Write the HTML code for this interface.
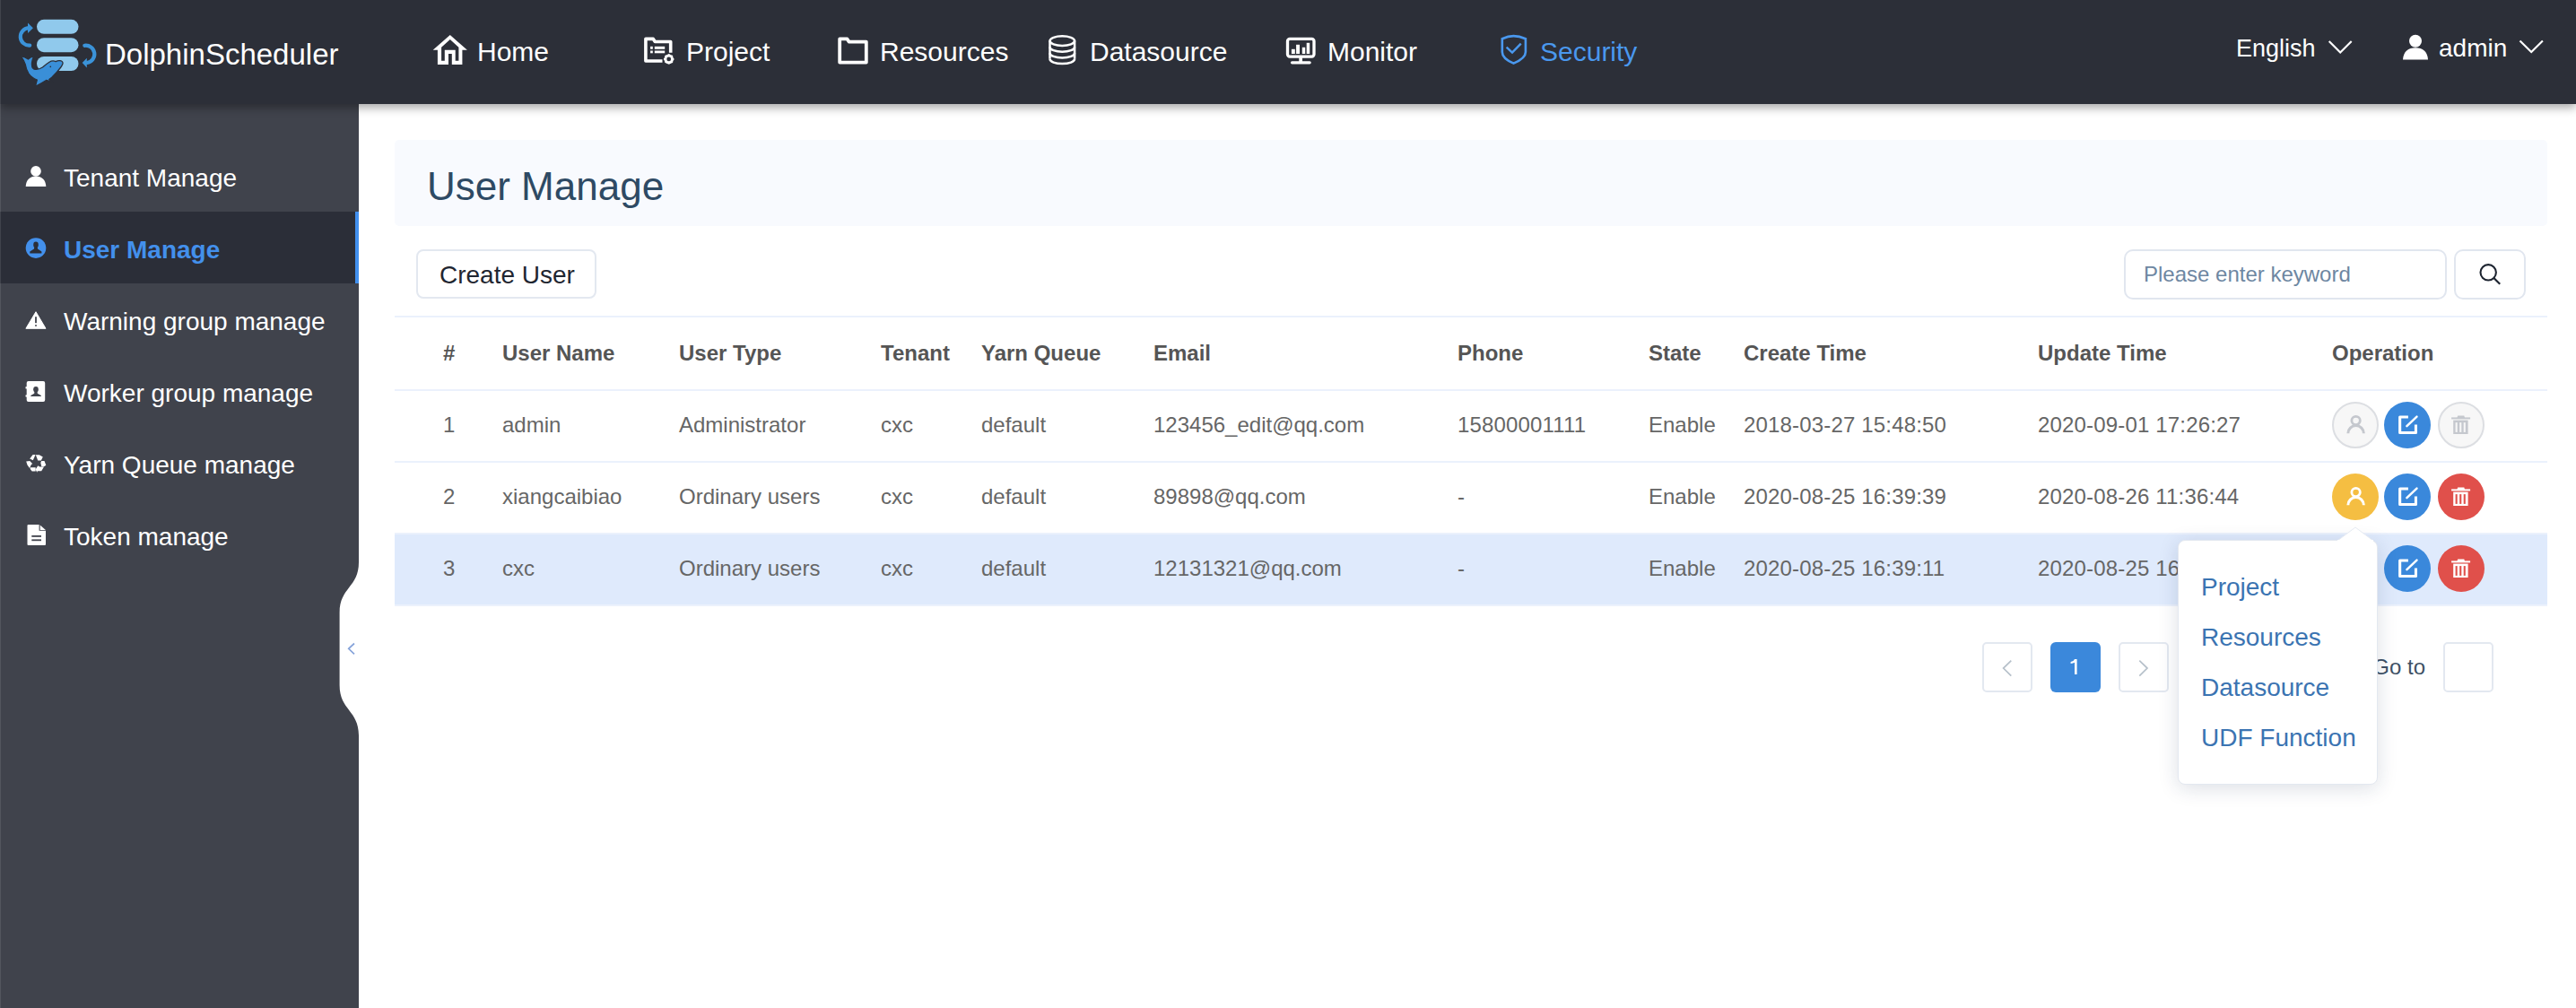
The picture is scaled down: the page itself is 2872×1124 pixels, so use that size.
<!DOCTYPE html>
<html><head><meta charset="utf-8">
<style>
*{box-sizing:border-box;margin:0;padding:0}
html,body{width:2872px;height:1124px;overflow:hidden;background:#fff;font-family:"Liberation Sans",sans-serif}
.a{position:absolute;white-space:pre}
#hdr{position:absolute;left:0;top:0;width:2872px;height:116px;background:#2c2f38;z-index:5;box-shadow:0 4px 10px rgba(0,0,0,.35)}
#side{position:absolute;left:0;top:116px;width:400px;height:1008px;background:#40434c}
.nav{font-size:30px;line-height:30px;color:#fff;top:43px;margin-left:-1px}
.si{font-size:28px;line-height:28px;color:#fff;left:71px;margin-top:1px}
.th{font-size:24px;line-height:24px;font-weight:bold;color:#555;top:382px}
.td{font-size:24px;line-height:24px;color:#666}
.dt{letter-spacing:.17px}
.pop{font-size:28px;line-height:28px;color:#3b74b2;left:2454px;margin-top:1px}
svg{position:absolute;overflow:visible}
</style></head><body>

<div id="hdr">
  <!-- logo -->
  <svg style="left:0;top:0" width="120" height="116" viewBox="0 0 120 116">
    <rect x="41" y="21.8" width="46.5" height="16" rx="8" fill="#90c9ec"/>
    <rect x="41" y="42.2" width="46.5" height="16" rx="8" fill="#90c9ec"/>
    <rect x="41" y="63" width="46.5" height="16" rx="8" fill="#90c9ec"/>
    <path d="M33.2,50.6 A9.7,9.7 0 1 1 31.8,31.2" fill="none" stroke="#3b93d9" stroke-width="4.2" stroke-linecap="round"/>
    <path d="M31,25.5 L36.9,31.2 L31,37.1 Z" fill="#3b93d9"/>
    <path d="M94.3,50.8 A9.6,9.6 0 1 1 97,70" fill="none" stroke="#3b93d9" stroke-width="4.2" stroke-linecap="round"/>
    <path d="M96.8,64.7 L91.7,70 L96.8,75.5 Z" fill="#3b93d9"/>
    <path d="M23.3,62.6 Q28,63.5 31.4,66 Q34,63.5 37.6,62.8 Q35.8,67 35.5,70 Q35,75 37.5,76.8 Q42,78.5 47.5,75 Q52,71 55,69.2 Q58.5,67 62.2,68.6 Q64.5,67.3 67,67.7 Q70.5,68.3 70,71 Q69,73.5 67.8,75 Q63,81.5 58,86 Q56,87.5 54.8,88.5 L58.8,91.5 L51.5,89.5 Q46,93 39.5,96.4 L41.3,89 Q35,86.5 32,82 Q29,77 28.3,72 Q27,67.5 23.3,62.6 Z" fill="#3a8fd8" stroke="#2c2f38" stroke-width="1.3" stroke-linejoin="round"/>
    <circle cx="56.3" cy="74.4" r="0.8" fill="#2c2f38"/>
  </svg>
  <div class="a" style="left:117px;top:44px;font-size:33px;line-height:33px;color:#fff">DolphinScheduler</div>

  <!-- home -->
  <svg style="left:475px;top:30px" width="60" height="50" viewBox="0 0 60 50">
    <path fill="#fff" fill-rule="evenodd" d="M26.8,8.9 L45.9,25.8 L40.4,25.8 L40.4,41.9 L28.8,41.9 L28.8,30 L25,30 L25,41.9 L12.9,41.9 L12.9,25.8 L7.7,25.8 Z M26.8,14.1 L36.4,22.8 L36.4,37.7 L32.7,37.7 L32.7,25.8 L20.8,25.8 L20.8,37.7 L17.1,37.7 L17.1,22.8 Z"/>
  </svg>
  <div class="a nav" style="left:533px">Home</div>
  <!-- project -->
  <svg style="left:710px;top:30px" width="60" height="50" viewBox="0 0 60 50">
    <path d="M28.5,38 H9.9 V13.4 H18.3 L20.3,16.5 H37.7 V28.8" fill="none" stroke="#fff" stroke-width="3.6" stroke-linejoin="round"/>
    <rect x="15.1" y="21.8" width="2.7" height="3" fill="#fff"/>
    <rect x="19.8" y="21.8" width="11.4" height="3" fill="#fff"/>
    <rect x="15.1" y="26.5" width="2.7" height="2.8" fill="#fff"/>
    <rect x="19.8" y="26.5" width="11.4" height="2.8" fill="#fff"/>
    <circle cx="35.7" cy="35.9" r="3.9" fill="none" stroke="#fff" stroke-width="2.8"/>
    <path d="M35.7,30.2 V41.6 M30,35.9 H41.4 M31.7,31.9 L39.7,39.9 M39.7,31.9 L31.7,39.9" stroke="#fff" stroke-width="2" />
    <circle cx="35.7" cy="35.9" r="2.4" fill="#2c2f38"/>
  </svg>
  <div class="a nav" style="left:766px">Project</div>
  <!-- resources -->
  <svg style="left:925px;top:30px" width="60" height="50" viewBox="0 0 60 50">
    <path d="M11.2,13.4 H19.5 L21.5,16.6 H40.8 V39.6 H11.2 Z" fill="none" stroke="#fff" stroke-width="3.8" stroke-linejoin="round"/>
  </svg>
  <div class="a nav" style="left:982px">Resources</div>
  <!-- datasource -->
  <svg style="left:1160px;top:30px" width="60" height="50" viewBox="0 0 60 50">
    <g fill="none" stroke="#fff" stroke-width="2.5">
      <ellipse cx="24.3" cy="15.6" rx="13.8" ry="5.3"/>
      <path d="M10.5,15.6 V35.8 M38.1,15.6 V35.8"/>
      <path d="M10.5,22.4 A13.8,5.3 0 0 0 38.1,22.4"/>
      <path d="M10.5,29.2 A13.8,5.3 0 0 0 38.1,29.2"/>
      <path d="M10.5,35.8 A13.8,5.3 0 0 0 38.1,35.8"/>
    </g>
  </svg>
  <div class="a nav" style="left:1216px">Datasource</div>
  <!-- monitor -->
  <svg style="left:1425px;top:30px" width="60" height="50" viewBox="0 0 60 50">
    <rect x="10.5" y="13.4" width="29.5" height="19.7" rx="2.5" fill="none" stroke="#fff" stroke-width="3.3"/>
    <rect x="23.3" y="34" width="3.7" height="5" fill="#fff"/>
    <path d="M15.5,39.8 H35.2" stroke="#fff" stroke-width="3.2" stroke-linecap="round"/>
    <rect x="14.9" y="24.8" width="3.9" height="5.2" fill="#fff"/>
    <rect x="20.1" y="19.8" width="3.9" height="10.2" fill="#fff"/>
    <rect x="26.8" y="22.8" width="3.4" height="7.2" fill="#fff"/>
    <rect x="31.7" y="17.8" width="3.5" height="12.2" fill="#fff"/>
  </svg>
  <div class="a nav" style="left:1481px">Monitor</div>
  <!-- security -->
  <svg style="left:1660px;top:30px" width="60" height="50" viewBox="0 0 60 50">
    <path d="M27.5,10.1 C32,10.1 37,11.5 40.9,13.2 V28 C40.9,33 35,37.5 27.5,40.6 C20,37.5 14.8,33 14.8,28 V13.2 C18.5,11.5 23,10.1 27.5,10.1 Z" fill="none" stroke="#4a98ee" stroke-width="2.6"/>
    <path d="M19.6,22.6 L26,28.6 L35.7,18.6" fill="none" stroke="#4a98ee" stroke-width="2.5"/>
  </svg>
  <div class="a nav" style="left:1718px;color:#4a98ee">Security</div>

  <div class="a" style="left:2493px;top:40px;font-size:27px;line-height:28px;color:#fff">English</div>
  <svg style="left:2590px;top:41px" width="40" height="30" viewBox="0 0 40 30">
    <path d="M6.7,5 L19.2,17.5 L31.7,5" fill="none" stroke="#fff" stroke-width="2.2"/>
  </svg>
  <svg style="left:2670px;top:30px" width="40" height="50" viewBox="0 0 40 50">
    <circle cx="23" cy="15.8" r="7" fill="#fff"/>
    <path d="M9,36.4 C9.5,27.5 15,23.2 23,23.2 C31,23.2 36.5,27.5 37,36.4 Z" fill="#fff"/>
  </svg>
  <div class="a" style="left:2719px;top:40px;font-size:28px;line-height:28px;color:#fff">admin</div>
  <svg style="left:2800px;top:40px" width="40" height="30" viewBox="0 0 40 30">
    <path d="M9.5,5.5 L22.2,18 L34.9,5.5" fill="none" stroke="#fff" stroke-width="2.2"/>
  </svg>
</div>

<div id="side">
  <div style="position:absolute;left:0;top:120px;width:400px;height:80px;background:#2b2e38"></div>
  <div style="position:absolute;left:396px;top:120px;width:4px;height:80px;background:#4290ee"></div>
</div>
<!-- sidebar icons and text (absolute to page) -->
<svg style="left:20px;top:175px" width="40" height="40" viewBox="0 0 40 40">
  <circle cx="20" cy="15.9" r="5.8" fill="#fff"/>
  <path d="M8.7,32.9 C9,25.5 13.5,21.4 20,21.4 C26.5,21.4 31,25.5 31.3,32.9 Z" fill="#fff"/>
</svg>
<div class="a si" style="top:184px">Tenant Manage</div>
<svg style="left:20px;top:255px" width="40" height="40" viewBox="0 0 40 40">
  <circle cx="20" cy="21.6" r="11.3" fill="#4390ec"/>
  <ellipse cx="20" cy="17.9" rx="2.8" ry="3.4" fill="#2b2e38"/>
  <path d="M18.2,20.5 H21.8 L22,22.6 L26.4,25.6 V27.4 H13.3 V25.6 L18,22.6 Z" fill="#2b2e38"/>
</svg>
<div class="a si" style="top:264px;font-weight:bold;color:#4390ec">User Manage</div>
<svg style="left:20px;top:335px" width="40" height="40" viewBox="0 0 40 40">
  <path d="M20,12.7 L31,31.3 H8.9 Z" fill="#fff" stroke="#fff" stroke-width="1" stroke-linejoin="round"/>
  <rect x="19.1" y="18.2" width="1.8" height="7" fill="#40434c"/>
  <rect x="19.1" y="27.2" width="1.8" height="1.6" fill="#40434c"/>
</svg>
<div class="a si" style="top:344px">Warning group manage</div>
<svg style="left:20px;top:415px" width="40" height="40" viewBox="0 0 40 40">
  <rect x="9.7" y="10.1" width="20.5" height="22.8" rx="2" fill="#fff"/>
  <rect x="8.5" y="16" width="1.5" height="2.6" rx=".7" fill="#fff"/>
  <rect x="8.5" y="25.2" width="1.5" height="2.6" rx=".7" fill="#fff"/>
  <ellipse cx="20" cy="19.3" rx="2.8" ry="3.2" fill="#40434c"/>
  <path d="M18.4,22 H21.6 L21.8,23.8 L25.8,26 V27 H14.3 V26 L18.2,23.8 Z" fill="#40434c"/>
</svg>
<div class="a si" style="top:424px">Worker group manage</div>
<svg style="left:20px;top:495px" width="40" height="40" viewBox="0 0 40 40">
  <g fill="#fff">
    <path d="M13.2,16.5 L16.6,11.9 H19.6 L16.8,18.3 Z"/>
    <path d="M19.8,12.2 H23.8 L27.8,14.5 L25.8,18.4 H22.2 L21.5,16.5 Z"/>
    <path d="M26.2,19 H29.5 L31.3,23.8 L29,25.3 H26.3 L25.3,21 Z"/>
    <path d="M24.3,25.6 H29 L26.2,30.2 H21.8 L21.3,31.7 L19.6,28.5 L22.3,24.3 Z"/>
    <path d="M13.7,26.2 H19.7 V30.6 H15.7 L13.7,28 Z"/>
    <path d="M9.2,19.5 L13.2,19 L16.3,22.3 L15,22.8 L13,27 L10.5,23.5 Z"/>
  </g>
</svg>
<div class="a si" style="top:504px">Yarn Queue manage</div>
<svg style="left:20px;top:575px" width="40" height="40" viewBox="0 0 40 40">
  <path d="M10.5,11 Q10.5,9.9 11.6,9.9 H23.6 V16.7 H31 V32 Q31,33.1 29.9,33.1 H11.6 Q10.5,33.1 10.5,32 Z" fill="#fff"/>
  <path d="M24.7,10.4 L30.9,16 H24.7 Z" fill="#fff"/>
  <rect x="15.3" y="22" width="10.7" height="1.8" fill="#40434c"/>
  <rect x="15.3" y="26.4" width="10.7" height="1.8" fill="#40434c"/>
</svg>
<div class="a si" style="top:584px">Token manage</div>

<!-- collapse notch -->
<svg style="left:370px;top:600px" width="40" height="240" viewBox="0 0 40 240">
  <path d="M30,0 V27 C30,55 8.6,55 8.6,83 V164 C8.6,192 30,192 30,220 V240 H40 V0 Z" fill="#fff"/>
  <path d="M25,117.5 L18.7,123.3 L25,129.3" fill="none" stroke="#86a3da" stroke-width="1.7"/>
</svg>

<!-- main content -->
<div style="position:absolute;left:440px;top:156px;width:2400px;height:96px;background:#f8fafe;border-radius:5px"></div>
<div class="a" style="left:476px;top:186px;font-size:44px;line-height:44px;color:#2e4a64">User Manage</div>

<div style="position:absolute;left:464px;top:278px;width:201px;height:55px;border:2px solid #e3e8f0;border-radius:8px;background:#fff"></div>
<div class="a" style="left:490px;top:293px;font-size:28px;line-height:28px;color:#1f2631">Create User</div>

<div style="position:absolute;left:2368px;top:278px;width:360px;height:56px;border:2px solid #e1e6ef;border-radius:10px;background:#fff"></div>
<div class="a" style="left:2390px;top:294px;font-size:24px;line-height:24px;color:#6e87a2">Please enter keyword</div>
<div style="position:absolute;left:2736px;top:278px;width:80px;height:56px;border:2px solid #e1e6ef;border-radius:10px;background:#fff"></div>
<svg style="left:2760px;top:290px" width="32" height="32" viewBox="0 0 32 32">
  <circle cx="14.2" cy="13.8" r="8.7" fill="none" stroke="#1d2430" stroke-width="2.1"/>
  <path d="M20.4,20 L27.2,26.8" stroke="#1d2430" stroke-width="2.2"/>
</svg>

<!-- table -->
<div style="position:absolute;left:440px;top:352px;width:2400px;height:2px;background:#ebf1fc"></div>
<div style="position:absolute;left:440px;top:434px;width:2400px;height:2px;background:#ebf1fc"></div>
<div style="position:absolute;left:440px;top:514px;width:2400px;height:2px;background:#ebf1fc"></div>
<div style="position:absolute;left:440px;top:594px;width:2400px;height:2px;background:#ebf1fc"></div>
<div style="position:absolute;left:440px;top:596px;width:2400px;height:78px;background:#dfeafc"></div>
<div style="position:absolute;left:440px;top:674px;width:2400px;height:2px;background:#ebf1fc"></div>

<div class="a th" style="left:494px">#</div>
<div class="a th" style="left:560px">User Name</div>
<div class="a th" style="left:757px">User Type</div>
<div class="a th" style="left:982px">Tenant</div>
<div class="a th" style="left:1094px">Yarn Queue</div>
<div class="a th" style="left:1286px">Email</div>
<div class="a th" style="left:1625px">Phone</div>
<div class="a th" style="left:1838px">State</div>
<div class="a th" style="left:1944px">Create Time</div>
<div class="a th" style="left:2272px">Update Time</div>
<div class="a th" style="left:2600px">Operation</div>

<div class="a td" style="left:494px;top:462px">1</div>
<div class="a td" style="left:560px;top:462px">admin</div>
<div class="a td" style="left:757px;top:462px">Administrator</div>
<div class="a td" style="left:982px;top:462px">cxc</div>
<div class="a td" style="left:1094px;top:462px">default</div>
<div class="a td" style="left:1286px;top:462px">123456_edit@qq.com</div>
<div class="a td dt" style="left:1625px;top:462px">15800001111</div>
<div class="a td" style="left:1838px;top:462px">Enable</div>
<div class="a td dt" style="left:1944px;top:462px">2018-03-27 15:48:50</div>
<div class="a td dt" style="left:2272px;top:462px">2020-09-01 17:26:27</div>

<div class="a td" style="left:494px;top:542px">2</div>
<div class="a td" style="left:560px;top:542px">xiangcaibiao</div>
<div class="a td" style="left:757px;top:542px">Ordinary users</div>
<div class="a td" style="left:982px;top:542px">cxc</div>
<div class="a td" style="left:1094px;top:542px">default</div>
<div class="a td" style="left:1286px;top:542px">89898@qq.com</div>
<div class="a td dt" style="left:1625px;top:542px">-</div>
<div class="a td" style="left:1838px;top:542px">Enable</div>
<div class="a td dt" style="left:1944px;top:542px">2020-08-25 16:39:39</div>
<div class="a td dt" style="left:2272px;top:542px">2020-08-26 11:36:44</div>

<div class="a td" style="left:494px;top:622px">3</div>
<div class="a td" style="left:560px;top:622px">cxc</div>
<div class="a td" style="left:757px;top:622px">Ordinary users</div>
<div class="a td" style="left:982px;top:622px">cxc</div>
<div class="a td" style="left:1094px;top:622px">default</div>
<div class="a td" style="left:1286px;top:622px">12131321@qq.com</div>
<div class="a td dt" style="left:1625px;top:622px">-</div>
<div class="a td" style="left:1838px;top:622px">Enable</div>
<div class="a td dt" style="left:1944px;top:622px">2020-08-25 16:39:11</div>
<div class="a td dt" style="left:2272px;top:622px">2020-08-25 16:39:11</div>

<!-- OPS -->
<div style="position:absolute;left:2600px;top:448px;width:52px;height:52px;border-radius:50%;background:#f7f7f7;border:2px solid #dcdee2;"></div>
<svg style="left:2600px;top:448px" width="52" height="52" viewBox="-26 -26 52 52"><circle cx="0.6" cy="-5" r="4.7" fill="none" stroke="#c5c8ce" stroke-width="2.8"/><path d="M-8.15,9.3 A8.75,8.75 0 0 1 9.35,9.3" fill="none" stroke="#c5c8ce" stroke-width="3"/></svg>
<div style="position:absolute;left:2658px;top:448px;width:52px;height:52px;border-radius:50%;background:#3a88db;"></div>
<svg style="left:2658px;top:448px" width="52" height="52" viewBox="-26 -26 52 52"><path d="M0.9,-9.05 H-8.35 V8.45 H9.45 V-0.5" fill="none" stroke="#fff" stroke-width="3.1" stroke-linejoin="round"/><path d="M-0.6,1.1 L10.5,-9.4" stroke="#fff" stroke-width="2.5" stroke-linecap="round"/></svg>
<div style="position:absolute;left:2718px;top:448px;width:52px;height:52px;border-radius:50%;background:#f7f7f7;border:2px solid #dcdee2;"></div>
<svg style="left:2718px;top:448px" width="52" height="52" viewBox="-26 -26 52 52"><rect x="-10.9" y="-8.6" width="21" height="2" fill="#c5c8ce"/><path d="M-4.6,-8 L-3.8,-10.4 H3.3 L4.1,-8 Z" fill="#c5c8ce"/><rect x="-8.8" y="-5.4" width="16.4" height="15.4" fill="#c5c8ce"/><rect x="-6.4" y="-2.9" width="2.1" height="10.8" fill="#f7f7f7"/><rect x="-1.8" y="-2.9" width="2.1" height="10.8" fill="#f7f7f7"/><rect x="2.7" y="-2.9" width="2.1" height="10.8" fill="#f7f7f7"/></svg>
<div style="position:absolute;left:2600px;top:528px;width:52px;height:52px;border-radius:50%;background:#f5be42;"></div>
<svg style="left:2600px;top:528px" width="52" height="52" viewBox="-26 -26 52 52"><circle cx="0.6" cy="-5" r="4.7" fill="none" stroke="#fff" stroke-width="2.8"/><path d="M-8.15,9.3 A8.75,8.75 0 0 1 9.35,9.3" fill="none" stroke="#fff" stroke-width="3"/></svg>
<div style="position:absolute;left:2658px;top:528px;width:52px;height:52px;border-radius:50%;background:#3a88db;"></div>
<svg style="left:2658px;top:528px" width="52" height="52" viewBox="-26 -26 52 52"><path d="M0.9,-9.05 H-8.35 V8.45 H9.45 V-0.5" fill="none" stroke="#fff" stroke-width="3.1" stroke-linejoin="round"/><path d="M-0.6,1.1 L10.5,-9.4" stroke="#fff" stroke-width="2.5" stroke-linecap="round"/></svg>
<div style="position:absolute;left:2718px;top:528px;width:52px;height:52px;border-radius:50%;background:#e0504b;"></div>
<svg style="left:2718px;top:528px" width="52" height="52" viewBox="-26 -26 52 52"><rect x="-10.9" y="-8.6" width="21" height="2" fill="#fff"/><path d="M-4.6,-8 L-3.8,-10.4 H3.3 L4.1,-8 Z" fill="#fff"/><rect x="-8.8" y="-5.4" width="16.4" height="15.4" fill="#fff"/><rect x="-6.4" y="-2.9" width="2.1" height="10.8" fill="#e0504b"/><rect x="-1.8" y="-2.9" width="2.1" height="10.8" fill="#e0504b"/><rect x="2.7" y="-2.9" width="2.1" height="10.8" fill="#e0504b"/></svg>
<div style="position:absolute;left:2658px;top:608px;width:52px;height:52px;border-radius:50%;background:#3a88db;"></div>
<svg style="left:2658px;top:608px" width="52" height="52" viewBox="-26 -26 52 52"><path d="M0.9,-9.05 H-8.35 V8.45 H9.45 V-0.5" fill="none" stroke="#fff" stroke-width="3.1" stroke-linejoin="round"/><path d="M-0.6,1.1 L10.5,-9.4" stroke="#fff" stroke-width="2.5" stroke-linecap="round"/></svg>
<div style="position:absolute;left:2718px;top:608px;width:52px;height:52px;border-radius:50%;background:#e0504b;"></div>
<svg style="left:2718px;top:608px" width="52" height="52" viewBox="-26 -26 52 52"><rect x="-10.9" y="-8.6" width="21" height="2" fill="#fff"/><path d="M-4.6,-8 L-3.8,-10.4 H3.3 L4.1,-8 Z" fill="#fff"/><rect x="-8.8" y="-5.4" width="16.4" height="15.4" fill="#fff"/><rect x="-6.4" y="-2.9" width="2.1" height="10.8" fill="#e0504b"/><rect x="-1.8" y="-2.9" width="2.1" height="10.8" fill="#e0504b"/><rect x="2.7" y="-2.9" width="2.1" height="10.8" fill="#e0504b"/></svg>

<!-- pagination -->
<div style="position:absolute;left:2210px;top:716px;width:56px;height:56px;border:2px solid #e3e8f0;border-radius:5px"></div>
<svg style="left:2210px;top:716px" width="56" height="56" viewBox="0 0 56 56"><path d="M32.3,20.6 L23.6,29.1 L32.3,37.6" fill="none" stroke="#b6c0ca" stroke-width="1.7"/></svg>
<div style="position:absolute;left:2286px;top:716px;width:56px;height:56px;background:#3b88db;border-radius:6px"></div>
<svg style="left:2286px;top:716px" width="56" height="56" viewBox="0 0 56 56"><path d="M27,18.9 H29.6 V35.9 H27 V22.8 Q25.4,23.8 22.6,24 V22.1 Q26,21.6 27,18.9 Z" fill="#fff"/></svg>
<div style="position:absolute;left:2362px;top:716px;width:56px;height:56px;border:2px solid #e3e8f0;border-radius:5px"></div>
<svg style="left:2362px;top:716px" width="56" height="56" viewBox="0 0 56 56"><path d="M23.3,20.6 L32,29.1 L23.3,37.6" fill="none" stroke="#b6c0ca" stroke-width="1.7"/></svg>
<div class="a" style="left:2600px;top:732px;width:104px;text-align:right;font-size:24px;line-height:24px;color:#3e5165">Go to</div>
<div style="position:absolute;left:2724px;top:716px;width:56px;height:56px;border:2px solid #e3e8f0;border-radius:5px"></div>

<!-- popover -->
<div style="position:absolute;left:2428px;top:602px;width:223px;height:273px;background:#fff;border:1px solid #e3e8f0;border-radius:8px;box-shadow:0 4px 22px rgba(20,40,80,.15)"></div>
<svg style="left:2606px;top:586px" width="40" height="20" viewBox="0 0 40 20">
  <path d="M0,17 L20,2 L40,17 Z" fill="#fff" stroke="#e6ebf3" stroke-width="1"/>
  <rect x="0" y="16" width="40" height="4" fill="#fff"/>
</svg>
<div class="a pop" style="top:640px">Project</div>
<div class="a pop" style="top:696px">Resources</div>
<div class="a pop" style="top:752px">Datasource</div>
<div class="a pop" style="top:808px">UDF Function</div>

<div style="position:absolute;left:0;top:0;width:1px;height:1124px;background:rgba(255,255,255,.1);z-index:10"></div>
</body></html>
